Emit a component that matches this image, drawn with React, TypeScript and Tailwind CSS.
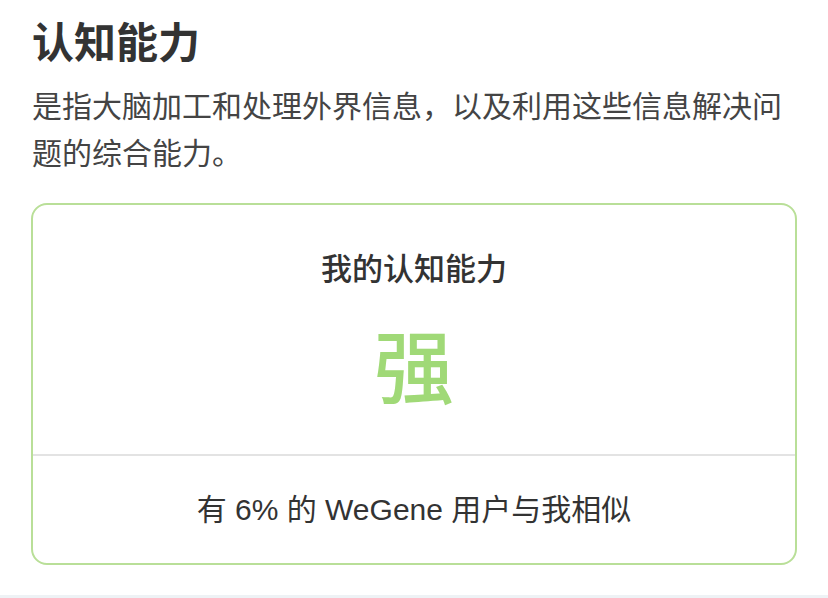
export default function App() {
  return (
    <div
      className="relative h-[598px] w-[828px] overflow-hidden bg-white"
      style={{ fontFamily: '"Liberation Sans", "Noto Sans CJK SC", sans-serif' }}
    >
      <div className="px-8 pt-[16px]">
        <h1 className="text-[42px] font-bold leading-[56px] text-[#333]">认知能力</h1>
        <p className="mt-[11px] text-[30px] leading-[47px] text-[#444]">
          是指大脑加工和处理外界信息，以及利用这些信息解决问题的综合能力。
        </p>
      </div>

      <div className="mx-[31px] mt-[26px] rounded-[16px] border-2 border-[#b9df98] bg-white">
        <div className="flex h-[249px] flex-col items-center">
          <div className="mt-[45px] text-[31px] font-medium leading-[40px] text-[#333]">我的认知能力</div>
          <div className="mt-[32px] text-[80px] font-medium leading-[96px] text-[#a0d977]">强</div>
        </div>
        <div className="h-[2px] bg-[#e3e3e3]" />
        <div className="flex h-[107px] items-center justify-center text-[30px] text-[#333]">
          有 6% 的 WeGene 用户与我相似
        </div>
      </div>

      <div className="absolute bottom-0 left-0 h-[3px] w-full bg-[#eef2f5]" />
    </div>
  );
}
